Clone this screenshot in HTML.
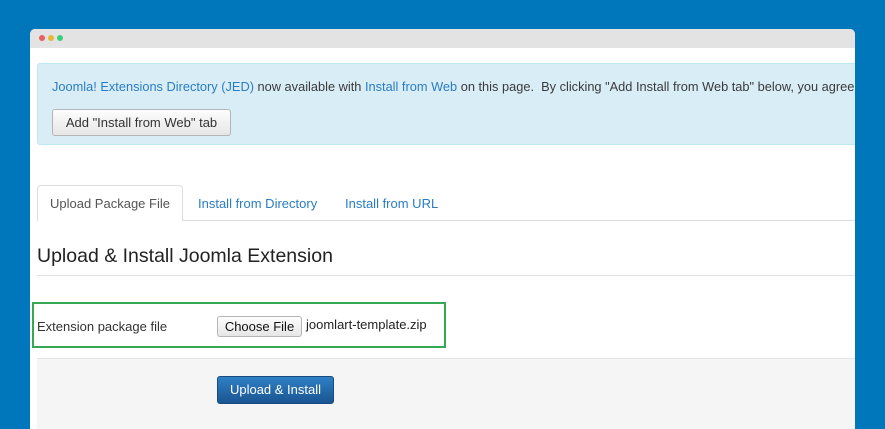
<!DOCTYPE html>
<html><head><style>
body{margin:0;width:885px;height:422px;background:#0077ba;font-family:"Liberation Sans",Arial,sans-serif;overflow:hidden;position:relative}
.win{position:absolute;left:30px;top:29px;width:825px;height:400px;background:#fff;border-radius:5px 5px 0 0;overflow:hidden}
.bar{height:19px;background:#e3e3e3;position:relative}
.dot{position:absolute;top:6px;width:6px;height:6px;border-radius:50%}
.a{position:absolute}
.alert{left:7px;top:34px;width:830px;height:82px;background:#d9edf7;border:1px solid #bce8f1;border-radius:3px;box-sizing:border-box}
.t{font-size:13px;color:#3a3a3a;white-space:nowrap}
.lnk{color:#2a7dc4}
.btn{background:linear-gradient(#fdfdfd,#e6e6e6);border:1px solid #b5b5b5;border-radius:3px;box-sizing:border-box;font-size:13px;color:#333;text-align:center}
</style></head><body>
<div class="win">
<div class="bar">
<div class="dot" style="left:9px;background:#e86060"></div>
<div class="dot" style="left:18px;background:#e8b73a"></div>
<div class="dot" style="left:27px;background:#3ccf7a"></div>
</div>
<div class="a alert"></div>
<div class="a t" style="left:22px;top:50px;font-size:12.8px"><span class="lnk">Joomla! Extensions Directory (JED)</span> now available with <span class="lnk">Install from Web</span> on this page.&nbsp; By clicking "Add Install from Web tab" below, you agree</div>
<div class="a btn" style="left:22px;top:80px;width:179px;height:27px;line-height:25px">Add "Install from Web" tab</div>
<div class="a" style="left:7px;top:191px;width:830px;border-top:1px solid #ddd"></div>
<div class="a" style="left:7px;top:156px;width:146px;height:36px;background:#fff;border:1px solid #ddd;border-bottom:none;border-radius:4px 4px 0 0;box-sizing:border-box"></div>
<div class="a t" style="left:20px;top:167px;color:#555">Upload Package File</div>
<div class="a t lnk" style="left:168px;top:167px">Install from Directory</div>
<div class="a t lnk" style="left:315px;top:167px">Install from URL</div>
<div class="a" style="left:7px;top:216px;font-size:19.5px;color:#222">Upload &amp; Install Joomla Extension</div>
<div class="a" style="left:7px;top:246px;width:830px;border-top:1px solid #e2e2e2"></div>
<div class="a" style="left:2px;top:273px;width:414px;height:46px;border:2px solid #34a853;box-sizing:border-box"></div>
<div class="a t" style="left:7px;top:290px;color:#333">Extension package file</div>
<div class="a btn" style="left:187px;top:287px;width:85px;height:21px;line-height:19px;font-size:13px;color:#111">Choose File</div>
<div class="a t" style="left:276px;top:288px;color:#222;font-size:13px">joomlart-template.zip</div>
<div class="a" style="left:7px;top:329px;width:830px;height:80px;background:#f5f5f5;border-top:1px solid #e5e5e5"></div>
<div class="a" style="left:187px;top:347px;width:117px;height:28px;background:linear-gradient(#2f7fc4,#1a5592);border:1px solid #174a80;border-radius:3px;box-sizing:border-box;color:#fff;font-size:13px;text-align:center;line-height:26px">Upload &amp; Install</div>
</div>
</body></html>
